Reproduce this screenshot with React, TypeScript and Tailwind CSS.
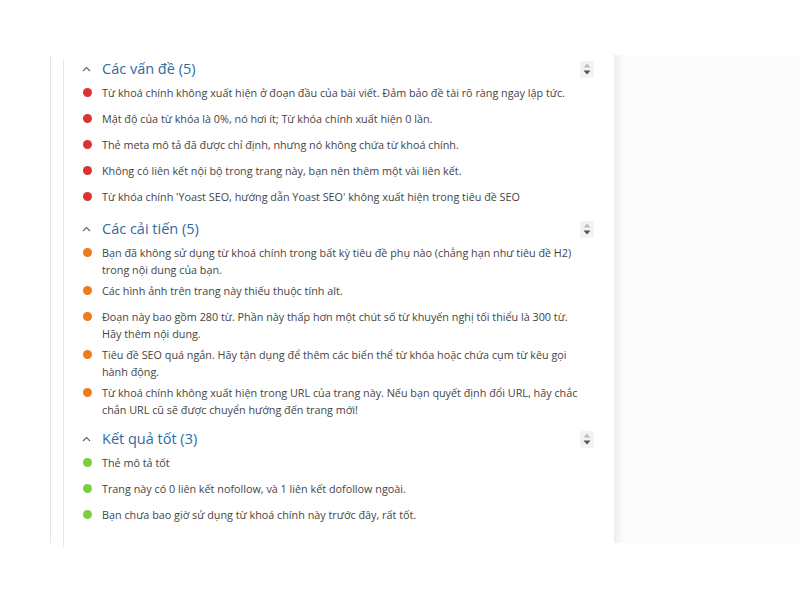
import React from "react";

type Group = { title: string; color: string; items: string[][]; gapTop: string };

const groups: Group[] = [
  {
    title: "Các vấn đề (5)",
    color: "bg-[#dc3232]",
    gapTop: "mt-[4px]",
    items: [
      ["Từ khoá chính không xuất hiện ở đoạn đầu của bài viết. Đảm bảo đề tài rõ ràng ngay lập tức."],
      ["Mật độ của từ khóa là 0%, nó hơi ít; Từ khóa chính xuất hiện 0 lần."],
      ["Thẻ meta mô tả đã được chỉ định, nhưng nó không chứa từ khoá chính."],
      ["Không có liên kết nội bộ trong trang này, bạn nên thêm một vài liên kết."],
      ["Từ khóa chính 'Yoast SEO, hướng dẫn Yoast SEO' không xuất hiện trong tiêu đề SEO"],
    ],
  },
  {
    title: "Các cải tiến (5)",
    color: "bg-[#ee7c1b]",
    gapTop: "mt-[9px]",
    items: [
      ["Bạn đã không sử dụng từ khoá chính trong bất kỳ tiêu đề phụ nào (chẳng hạn như tiêu đề H2)", "trong nội dung của bạn."],
      ["Các hình ảnh trên trang này thiếu thuộc tính alt."],
      ["Đoạn này bao gồm 280 từ. Phần này thấp hơn một chút số từ khuyến nghị tối thiểu là 300 từ.", "Hãy thêm nội dung."],
      ["Tiêu đề SEO quá ngắn. Hãy tận dụng để thêm các biến thể từ khóa hoặc chứa cụm từ kêu gọi", "hành động."],
      ["Từ khoá chính không xuất hiện trong URL của trang này. Nếu bạn quyết định đổi URL, hãy chắc", "chắn URL cũ sẽ được chuyển hướng đến trang mới!"],
    ],
  },
  {
    title: "Kết quả tốt (3)",
    color: "bg-[#7ad03a]",
    gapTop: "mt-[11px]",
    items: [
      ["Thẻ mô tả tốt"],
      ["Trang này có 0 liên kết nofollow, và 1 liên kết dofollow ngoài."],
      ["Bạn chưa bao giờ sử dụng từ khoá chính này trước đây, rất tốt."],
    ],
  },
];

function Chevron() {
  return (
    <svg width="9" height="6" viewBox="0 0 9 6" className="shrink-0">
      <path d="M1 5 L4.5 1.5 L8 5" fill="none" stroke="#666" strokeWidth="1.2" />
    </svg>
  );
}

function SortIcon() {
  return (
    <div className="w-[14px] h-[17px] bg-[#f3f3f3] flex flex-col items-center justify-center gap-[2px] rounded-[2px]">
      <svg width="8" height="5" viewBox="0 0 8 5">
        <path d="M4 0.5 L7.5 4.5 L0.5 4.5 Z" fill="#bdbdbd" />
      </svg>
      <svg width="8" height="5" viewBox="0 0 8 5">
        <path d="M0.5 0.5 L7.5 0.5 L4 4.5 Z" fill="#555" />
      </svg>
    </div>
  );
}

export default function App() {
  return (
    <div
      className="w-[800px] h-[600px] bg-white pt-[55px] overflow-hidden"
      style={{ fontFamily: '"Open Sans", "Noto Sans", sans-serif' }}
    >
      <div className="flex h-[488px] ml-[50px]">
        <div className="w-[565px] border-l border-[#e6e6e6] pl-[12px] border-r border-r-[#ececec]">
          <div className="h-full border-l border-[#e6e6e6] pl-[18px] pr-[20px]">
            {groups.map((g, gi) => (
              <div key={gi} className={g.gapTop}>
                <div className="flex items-center h-[20px]">
                  <Chevron />
                  <span className="ml-[11px] text-[14.5px] text-[#2f6b9e] leading-[20px]">{g.title}</span>
                  <div className="ml-auto">
                    <SortIcon />
                  </div>
                </div>
                <ul className="mt-[5px]">
                  {g.items.map((it, ii) => (
                    <li key={ii} className="flex min-h-[22px] mb-[4px]">
                      <span className={`w-[9px] h-[9px] rounded-full ${g.color} shrink-0 mt-[4px] ml-[1px]`} />
                      <div className="ml-[10px] text-[10.8px] leading-[17px] text-[#444]">
                        {it.map((l, li) => (
                          <div key={li} className="whitespace-nowrap">{l}</div>
                        ))}
                      </div>
                    </li>
                  ))}
                </ul>
              </div>
            ))}
          </div>
        </div>
        <div className="flex-1 flex">
          <div className="w-[8px] bg-gradient-to-r from-[#f0f0f0] to-[#fbfbfb]" />
          <div className="flex-1 bg-[#fcfcfc]" />
        </div>
      </div>
    </div>
  );
}
